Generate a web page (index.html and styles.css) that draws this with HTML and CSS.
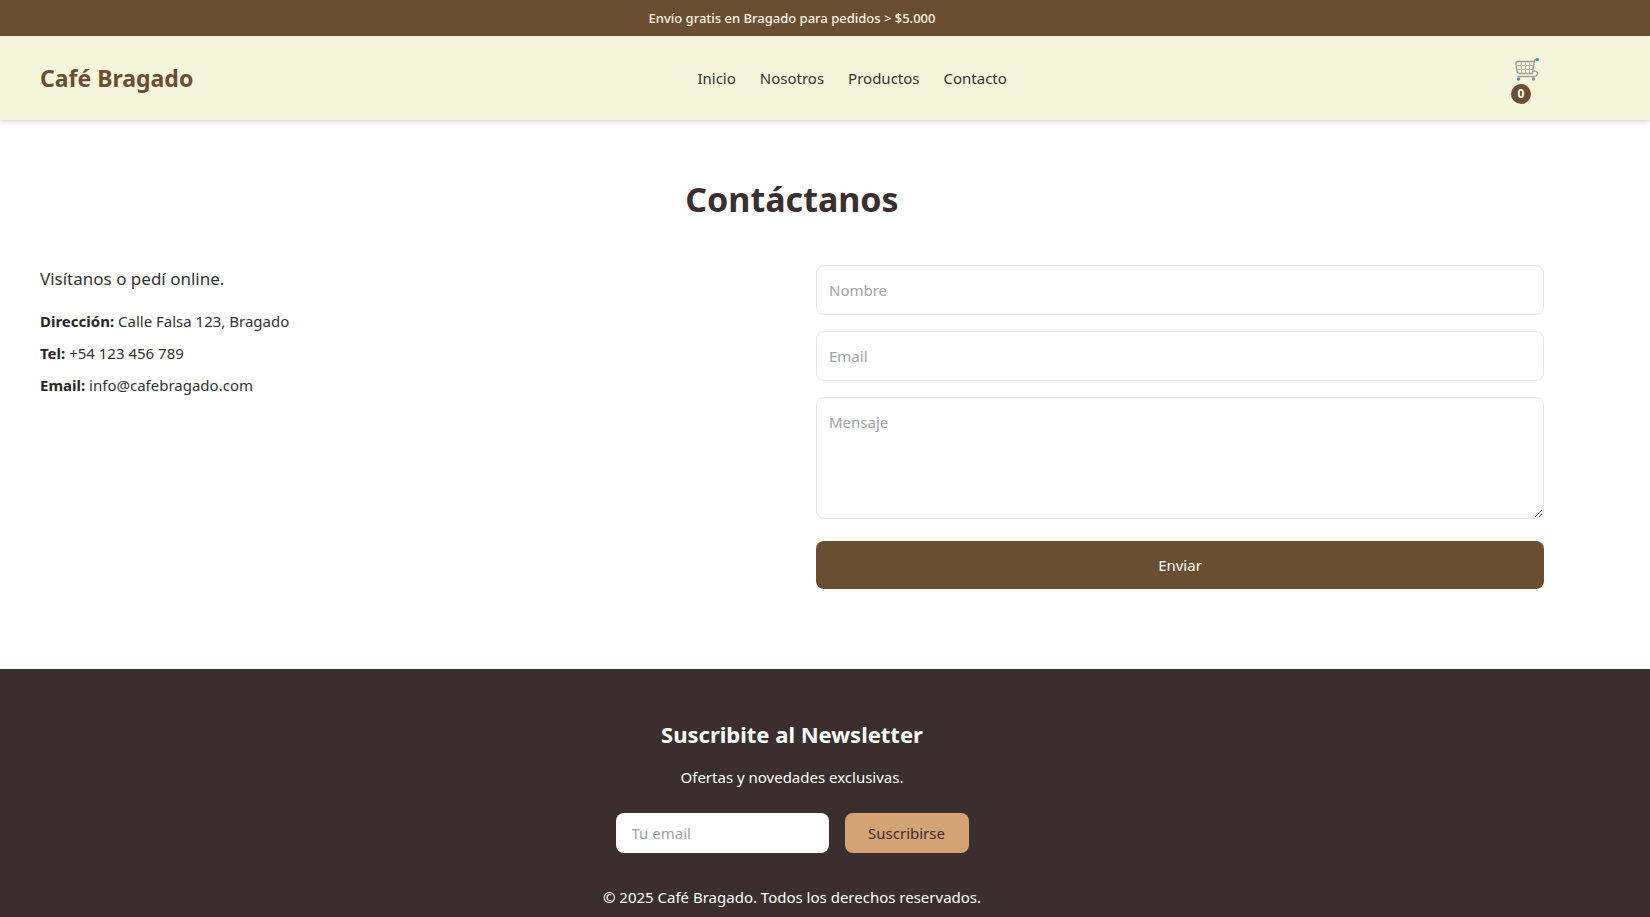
FILE: index.html
```html
<!DOCTYPE html>
<html lang="es">
<head>
<meta charset="utf-8">
<meta name="viewport" content="width=device-width, initial-scale=1">
<title>Café Bragado</title>
<link rel="stylesheet" href="styles.css">
</head>
<body>
<div class="promo shell">Envío gratis en Bragado para pedidos &gt; $5.000</div>
<header class="header shell">
  <div class="logo">Café Bragado</div>
  <nav class="nav">
    <a href="#inicio">Inicio</a>
    <a href="#nosotros">Nosotros</a>
    <a href="#productos">Productos</a>
    <a href="#contacto">Contacto</a>
  </nav>
  <button class="cart" type="button" aria-label="Carrito">
    <svg class="cart-icon" viewBox="0 0 24 24" fill="none" stroke-linecap="round" stroke-linejoin="round">
      <path d="M2.500 3.500H19L17.500 15.500H5C3 15.500 2.300 14.800 2 13L1 6C.8 4.500 1.300 3.500 2.500 3.500z" stroke="#9a9996" stroke-width="1.300"/>
      <path d="M6 3.500l.7 12M10.300 3.500l.2 12M14.700 3.500l-.4 12M1.300 7.500h17M1.800 11.500h16" stroke="#b3b2aa" stroke-width="1"/>
      <path d="M21.500 1.500l-2 .5-2.200 13.500M18 13.500c2.500-.8 4.700.1 4.500 2-.2 1.800-1.700 3-4 3H3" stroke="#a19fa5" stroke-width="1.300"/>
      <path d="M21.700 1.500h1" stroke="#278da8" stroke-width="2.500"/>
      <circle cx="3.500" cy="21" r="1.700" fill="#5888c8"/>
      <circle cx="18.500" cy="21" r="1.700" fill="#858ba0"/>
    </svg>
    <span class="badge">0</span>
  </button>
</header>
<main class="contact shell">
  <h1 class="title">Contáctanos</h1>
  <div class="columns">
    <section class="info">
      <p class="lead">Visítanos o pedí online.</p>
      <p><strong>Dirección:</strong> Calle Falsa 123, Bragado</p>
      <p><strong>Tel:</strong> +54 123 456 789</p>
      <p><strong>Email:</strong> info@cafebragado.com</p>
    </section>
    <form class="form">
      <input class="field" type="text" placeholder="Nombre" aria-label="Nombre">
      <input class="field" type="email" placeholder="Email" aria-label="Email">
      <textarea class="field message" placeholder="Mensaje" aria-label="Mensaje"></textarea>
      <button class="send" type="submit">Enviar</button>
    </form>
  </div>
</main>
<footer class="footer shell">
  <h2 class="footer-title">Suscribite al Newsletter</h2>
  <p class="footer-text">Ofertas y novedades exclusivas.</p>
  <form class="subscribe">
    <input class="subscribe-email" type="email" placeholder="Tu email" aria-label="Tu email">
    <button class="subscribe-button" type="submit">Suscribirse</button>
  </form>
  <p class="footer-text">© 2025 Café Bragado. Todos los derechos reservados.</p>
</footer>
</body>
</html>
```
FILE: styles.css
```css
:root {
  --brown: #6b4e31;
  --cream: #f5f5dc;
  --dark: #3a2e2e;
  --tan: #d4a373;
  --text: #333;
}
* { box-sizing: border-box; }
body {
  margin: 0;
  min-height: 100vh;
  display: flex;
  flex-direction: column;
  background: #fff;
  color: var(--text);
  font: 15px/24px "Segoe UI", "Noto Sans", "Open Sans", sans-serif;
}
h1, h2, p { margin: 0; }
input, textarea, button { font: inherit; }
button { border: 0; cursor: pointer; }
.shell { padding-left: 40px; padding-right: 106px; }

.promo {
  padding-top: 8px;
  padding-bottom: 8px;
  background: var(--brown);
  color: #fff5e6;
  font-size: 13px;
  font-weight: 500;
  line-height: 20px;
  text-align: center;
}
.header {
  position: relative;
  display: flex;
  align-items: center;
  justify-content: space-between;
  padding-top: 16px;
  padding-bottom: 16px;
  background: var(--cream);
  box-shadow: 0 2px 4px rgba(0, 0, 0, .15);
}
.logo {
  color: var(--brown);
  font-size: 23px;
  font-weight: 700;
  line-height: 32px;
}
.nav { display: flex; gap: 24px; }
.nav a { color: var(--text); text-decoration: none; }
.cart {
  display: flex;
  flex-direction: column;
  gap: 2px;
  width: 33px;
  padding: 6px 0 0;
  background: none;
}
.cart-icon { width: 24px; height: 24px; margin-left: 4px; }
.badge {
  width: 20px;
  height: 20px;
  border-radius: 50%;
  background: var(--brown);
  color: #fff;
  font-size: 12px;
  font-weight: 700;
  line-height: 20px;
  text-align: center;
}

.contact { padding-top: 56px; padding-bottom: 80px; }
.title {
  margin-bottom: 43px;
  color: var(--dark);
  font-size: 34px;
  line-height: 46px;
  text-align: center;
}
.columns {
  display: grid;
  grid-template-columns: 1fr 1fr;
  gap: 48px;
}
.info { display: flex; flex-direction: column; gap: 8px; }
.info strong { color: #2b2626; }
.info .lead { margin-bottom: 8px; font-size: 17px; line-height: 28px; }
.form { display: flex; flex-direction: column; gap: 16px; }
.field {
  width: 100%;
  height: 50px;
  padding: 12px;
  border: 1px solid #e5e7eb;
  border-radius: 8px;
  background: #fff;
  color: var(--text);
}
.field::placeholder, .subscribe-email::placeholder { color: #a0a3a8; opacity: 1; }
.message { height: 122px; margin-bottom: 6px; resize: vertical; }
.send {
  height: 48px;
  border-radius: 8px;
  background: var(--brown);
  color: #fff;
}

.footer {
  flex: 1;
  display: flex;
  flex-direction: column;
  align-items: center;
  padding-top: 49px;
  padding-bottom: 8px;
  background: var(--dark);
  color: #fff;
}
.footer-title { margin-bottom: 15px; font-size: 22px; line-height: 32px; }
.footer-text { line-height: 24px; }
.subscribe { display: flex; gap: 16px; margin: 24px 0 32px; }
.subscribe-email {
  width: 213px;
  height: 40px;
  padding: 8px 16px;
  border: 0;
  border-radius: 8px;
  background: #fff;
}
.subscribe-button {
  width: 124px;
  padding: 0;
  border-radius: 8px;
  background: var(--tan);
  color: var(--dark);
}
```
